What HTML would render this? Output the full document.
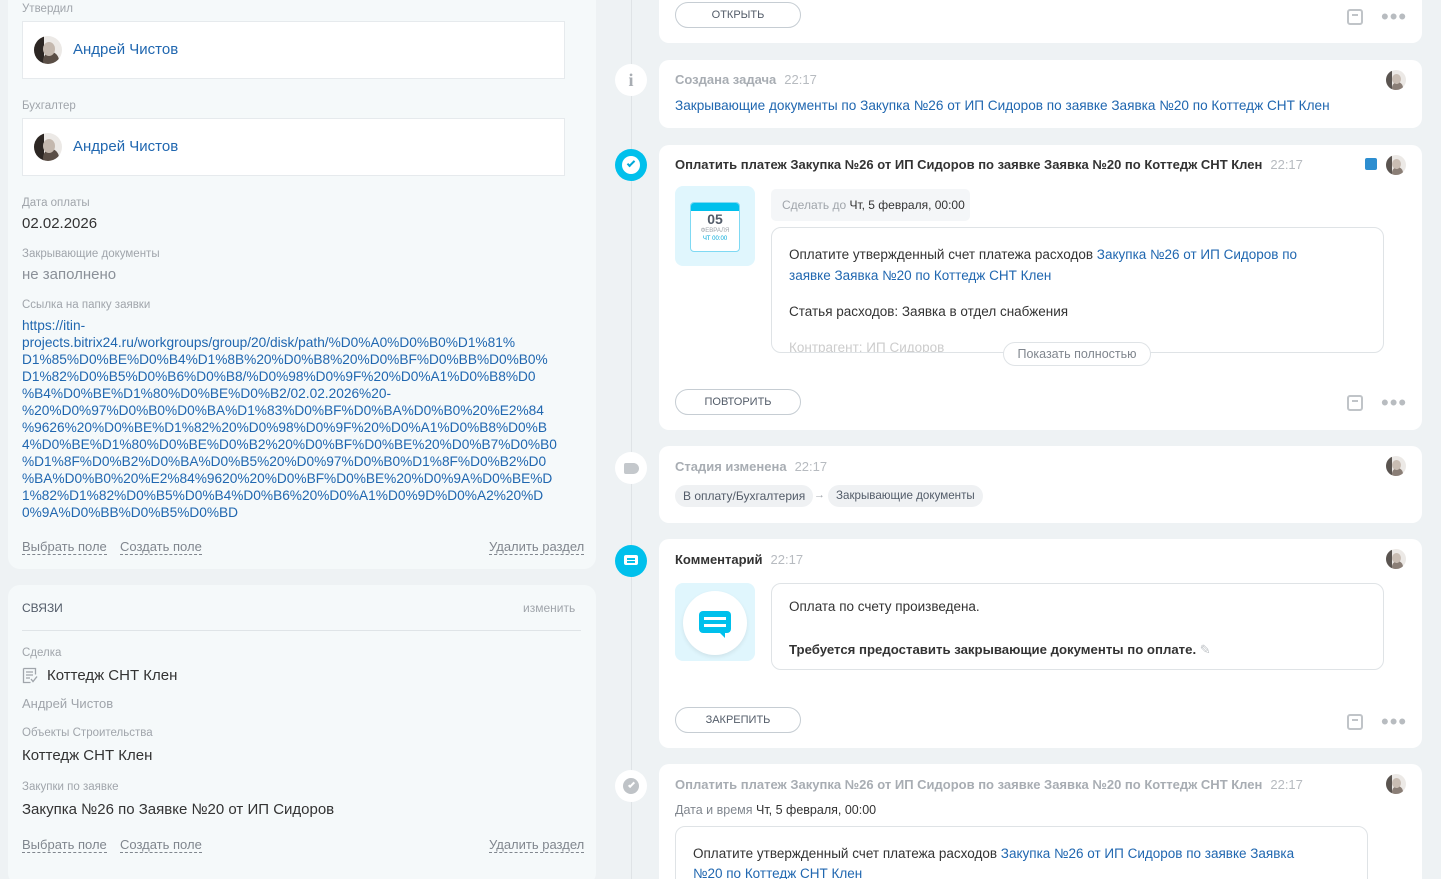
<!DOCTYPE html>
<html><head><meta charset="utf-8"><style>
*{box-sizing:border-box;margin:0;padding:0}
html,body{width:1441px;height:879px;overflow:hidden}
body{background:#eef2f4;font-family:"Liberation Sans",sans-serif;position:relative;color:#333}
.a{position:absolute}
.panel{position:absolute;left:8px;width:588px;background:#f5f9fa;border-radius:12px}
.lbl{position:absolute;left:22px;font-size:11.5px;color:#a0a5ab}
.val{position:absolute;left:22px;font-size:15px;color:#333}
.ubox{position:absolute;left:22px;width:543px;height:58px;background:#fff;border:1px solid #e6eaed}
.ava{position:absolute;width:28px;height:28px;border-radius:50%;overflow:hidden;background:#ece9e6}
.ava:before{content:"";position:absolute;left:0;top:0;width:10px;height:28px;background:#2c2623}
.ava:after{content:"";position:absolute;left:9px;top:6px;width:12px;height:14px;border-radius:50%;background:#c4b8ae;box-shadow:2px 12px 0 2px #5a4e46}
.uname{position:absolute;left:50px;top:19px;font-size:15px;color:#2067b0}
.dash{position:absolute;font-size:13px;color:#80868e;border-bottom:1px dashed #80868e;line-height:14px}
.card{position:absolute;left:659px;width:763px;background:#fff;border-radius:10px;overflow:hidden}
.btn{position:absolute;width:126px;height:26px;border:1px solid #c6cdd3;border-radius:13px;font-size:11px;text-align:center;line-height:24px;color:#535c69;background:#fff}
.ico{position:absolute;width:16px;height:16px;border:2px solid #c0c4c8;border-radius:3px}
.ico:after{content:"";position:absolute;left:3px;top:3px;width:6px;height:2px;background:#c0c4c8}
.dots{position:absolute;font-size:22px;color:#b8bcc0;letter-spacing:1px;line-height:10px}
.ttl{position:absolute;left:16px;font-size:13px;font-weight:bold;color:#333}
.tm{font-weight:normal;color:#b7bbc0;margin-left:8px}
.ta{position:absolute;right:16px;width:20px;height:20px;border-radius:50%;overflow:hidden;background:#ece9e6}
.ta:before{content:"";position:absolute;left:0;top:0;width:6px;height:20px;background:#5a5450}
.ta:after{content:"";position:absolute;left:6px;top:4px;width:9px;height:10px;border-radius:50%;background:#c9bdb3;box-shadow:1px 9px 0 1px #8a7e76}
.node{position:absolute;left:615px;width:32px;height:32px;border-radius:50%}
.lnk{color:#2067b0}
</style></head><body>
<div class="panel" style="top:-20px;height:589px"></div>
<div class="lbl" style="top:3px">Утвердил</div>
<div class="ubox" style="top:21px"><div class="ava" style="left:11px;top:14px"></div><div class="uname">Андрей Чистов</div></div>
<div class="lbl" style="top:100px">Бухгалтер</div>
<div class="ubox" style="top:118px"><div class="ava" style="left:11px;top:14px"></div><div class="uname">Андрей Чистов</div></div>
<div class="lbl" style="top:197px">Дата оплаты</div>
<div class="val" style="top:215px">02.02.2026</div>
<div class="lbl" style="top:248px">Закрывающие документы</div>
<div class="val" style="top:266px;color:#8a9098">не заполнено</div>
<div class="lbl" style="top:299px">Ссылка на папку заявки</div>
<div class="a" style="left:22px;top:317px;font-size:13.7px;line-height:17px;color:#2067b0">https://itin-<br>projects.bitrix24.ru/workgroups/group/20/disk/path/%D0%A0%D0%B0%D1%81%<br>D1%85%D0%BE%D0%B4%D1%8B%20%D0%B8%20%D0%BF%D0%BB%D0%B0%<br>D1%82%D0%B5%D0%B6%D0%B8/%D0%98%D0%9F%20%D0%A1%D0%B8%D0<br>%B4%D0%BE%D1%80%D0%BE%D0%B2/02.02.2026%20-<br>%20%D0%97%D0%B0%D0%BA%D1%83%D0%BF%D0%BA%D0%B0%20%E2%84<br>%9626%20%D0%BE%D1%82%20%D0%98%D0%9F%20%D0%A1%D0%B8%D0%B<br>4%D0%BE%D1%80%D0%BE%D0%B2%20%D0%BF%D0%BE%20%D0%B7%D0%B0<br>%D1%8F%D0%B2%D0%BA%D0%B5%20%D0%97%D0%B0%D1%8F%D0%B2%D0<br>%BA%D0%B0%20%E2%84%9620%20%D0%BF%D0%BE%20%D0%9A%D0%BE%D<br>1%82%D1%82%D0%B5%D0%B4%D0%B6%20%D0%A1%D0%9D%D0%A2%20%D<br>0%9A%D0%BB%D0%B5%D0%BD</div>
<div class="dash" style="left:22px;top:540px">Выбрать поле</div>
<div class="dash" style="left:120px;top:540px">Создать поле</div>
<div class="dash" style="left:489px;top:540px">Удалить раздел</div>

<div class="panel" style="top:585px;height:300px"></div>
<div class="a" style="left:22px;top:601px;font-size:12px;color:#535c69">СВЯЗИ</div>
<div class="a" style="left:523px;top:601px;font-size:12px;color:#a0a5ab">изменить</div>
<div class="a" style="left:22px;top:630px;width:559px;height:1px;background:#dfe4e7"></div>
<div class="lbl" style="top:647px">Сделка</div>
<svg class="a" style="left:22px;top:667px" width="16" height="17" viewBox="0 0 16 17"><path d="M1.5 1.5h12v6M1.5 1.5v14h7" fill="none" stroke="#a0a5ab" stroke-width="1.3"/><path d="M4 5h7M4 8h7M4 11h4" stroke="#a0a5ab" stroke-width="1.2"/><path d="M9 12l2 2.5 4-5" fill="none" stroke="#a0a5ab" stroke-width="1.4"/></svg>
<div class="val" style="left:47px;top:667px">Коттедж СНТ Клен</div>
<div class="a" style="left:22px;top:696px;font-size:13px;color:#a0a5ab">Андрей Чистов</div>
<div class="lbl" style="top:727px">Объекты Строительства</div>
<div class="val" style="top:747px">Коттедж СНТ Клен</div>
<div class="lbl" style="top:781px">Закупки по заявке</div>
<div class="val" style="top:801px">Закупка №26 по Заявке №20 от ИП Сидоров</div>
<div class="dash" style="left:22px;top:838px">Выбрать поле</div>
<div class="dash" style="left:120px;top:838px">Создать поле</div>
<div class="dash" style="left:489px;top:838px">Удалить раздел</div>

<div class="a" style="left:631px;top:0;width:1px;height:879px;background:#dfe3e6"></div>

<div class="card" style="top:-20px;height:63px">
<div class="btn" style="left:16px;top:22px">ОТКРЫТЬ</div>
<div class="ico" style="left:688px;top:29px"></div><div class="dots" style="left:722px;top:32px">•••</div></div>

<div class="node" style="top:64px;background:#fff;color:#a8adb3;text-align:center;font:bold 18px/32px 'Liberation Serif',serif">i</div>
<div class="card" style="top:60px;height:68px">
<div class="ttl" style="top:12px;color:#a8adb3">Создана задача<span class="tm">22:17</span></div>
<div class="a" style="left:16px;top:38px;font-size:13.6px;color:#2067b0">Закрывающие документы по Закупка №26 от ИП Сидоров по заявке Заявка №20 по Коттедж СНТ Клен</div>
<div class="ta" style="top:10px"></div></div>

<div class="node" style="top:149px;background:#00c0ec"><div class="a" style="left:7px;top:7px;width:18px;height:18px;border-radius:50%;background:#fff"></div><div class="a" style="left:12px;top:12px;width:8px;height:4px;border-left:2px solid #00a8d8;border-bottom:2px solid #00a8d8;transform:rotate(-45deg)"></div></div>
<div class="card" style="top:145px;height:285px">
<div class="ttl" style="top:12px">Оплатить платеж Закупка №26 от ИП Сидоров по заявке Заявка №20 по Коттедж СНТ Клен<span class="tm">22:17</span></div>
<div class="a" style="left:706px;top:13px;width:12px;height:12px;background:#2d8ed0;border-radius:2px"></div>
<div class="ta" style="top:10px"></div>
<div class="a" style="left:16px;top:41px;width:80px;height:80px;background:#e0f6fd;border-radius:8px">
<div class="a" style="left:15px;top:16px;width:50px;height:50px;background:#fff;border:1px solid #7fd9f3;border-radius:4px;overflow:hidden"><div style="height:8px;background:#00c0ec"></div>
<div style="text-align:center;font-size:14px;font-weight:bold;color:#535c69;line-height:16px">05</div>
<div style="text-align:center;font-size:6px;color:#a0a5ab;line-height:8px">ФЕВРАЛЯ</div><div style="text-align:center;font-size:6px;color:#00a8d8;line-height:8px">ЧТ 00:00</div></div></div>
<div class="a" style="left:112px;top:44px;width:199px;height:32px;background:#f4f6f8;border-radius:5px;font-size:12px;line-height:32px;padding-left:11px;color:#a0a5ab;white-space:nowrap">Сделать до <span style="color:#333">Чт, 5 февраля, 00:00</span></div>
<div class="a" style="left:112px;top:82px;width:613px;height:126px;border:1px solid #dfe3e6;border-radius:10px;overflow:hidden;padding:16px 17px;font-size:13.5px;line-height:21px">Оплатите утвержденный счет платежа расходов <span class="lnk">Закупка №26 от ИП Сидоров по<br>заявке Заявка №20 по Коттедж СНТ Клен</span><div style="margin-top:15px">Статья расходов: Заявка в отдел снабжения</div><div style="margin-top:15px;color:#ccc">Контрагент: ИП Сидоров</div></div>
<div class="a" style="left:344px;top:197px;width:148px;height:24px;border:1px solid #dfe3e6;border-radius:12px;background:#fff;font-size:12.5px;color:#80868e;text-align:center;line-height:22px">Показать полностью</div>
<div class="btn" style="left:16px;top:244px">ПОВТОРИТЬ</div>
<div class="ico" style="left:688px;top:250px"></div><div class="dots" style="left:722px;top:253px">•••</div></div>

<div class="node" style="top:452px;background:#fff"><div class="a" style="left:9px;top:11px;width:15px;height:11px;background:#c4c8cc;border-radius:2px 6px 6px 2px"></div></div>
<div class="card" style="top:446px;height:77px">
<div class="ttl" style="top:13px;color:#a8adb3">Стадия изменена<span class="tm">22:17</span></div>
<div class="ta" style="top:10px"></div>
<div class="a" style="left:16px;top:39px;height:22px;padding:0 8px;background:#eff1f3;border-radius:11px;font-size:12px;line-height:22px;color:#535c69">В оплату/Бухгалтерия</div>
<div class="a" style="left:155px;top:43px;font-size:11px;color:#a0a5ab">→</div>
<div class="a" style="left:169px;top:39px;height:22px;padding:0 8px;background:#eff1f3;border-radius:11px;font-size:11.6px;line-height:22px;color:#535c69">Закрывающие документы</div></div>

<div class="node" style="top:545px;background:#00c0ec"><div class="a" style="left:9px;top:10px;width:14px;height:10px;background:#fff;border-radius:2px"></div><div class="a" style="left:12px;top:13px;width:8px;height:1.5px;background:#00c0ec;box-shadow:0 3px 0 #00c0ec"></div></div>
<div class="card" style="top:539px;height:209px">
<div class="ttl" style="top:13px">Комментарий<span class="tm">22:17</span></div>
<div class="ta" style="top:10px"></div>
<div class="a" style="left:16px;top:44px;width:80px;height:78px;background:#e0f6fd;border-radius:8px"><div class="a" style="left:8px;top:8px;width:64px;height:64px;border-radius:50%;background:#fff;box-shadow:0 2px 4px rgba(0,0,0,.08)"></div>
<div class="a" style="left:24px;top:28px;width:32px;height:22px;background:#00c0ec;border-radius:4px"></div><div class="a" style="left:29px;top:34px;width:22px;height:3px;background:#fff;box-shadow:0 7px 0 #fff"></div><div class="a" style="left:44px;top:49px;border-top:6px solid #00c0ec;border-left:6px solid transparent"></div></div>
<div class="a" style="left:112px;top:44px;width:613px;height:87px;border:1px solid #dfe3e6;border-radius:10px;padding:13px 17px;font-size:13.5px;line-height:20px">Оплата по счету произведена.<div style="margin-top:23px;font-weight:bold;font-size:13.2px">Требуется предоставить закрывающие документы по оплате. <span style="color:#c0c4c8;font-weight:normal">✎</span></div></div>
<div class="btn" style="left:16px;top:168px">ЗАКРЕПИТЬ</div>
<div class="ico" style="left:688px;top:175px"></div><div class="dots" style="left:722px;top:178px">•••</div></div>

<div class="node" style="top:770px;background:#fff"><div class="a" style="left:8px;top:8px;width:16px;height:16px;border-radius:50%;background:#bfc3c7"></div><div class="a" style="left:13px;top:13px;width:7px;height:3px;border-left:2px solid #fff;border-bottom:2px solid #fff;transform:rotate(-45deg)"></div></div>
<div class="card" style="top:764px;height:130px">
<div class="ttl" style="top:13px;color:#a8adb3">Оплатить платеж Закупка №26 от ИП Сидоров по заявке Заявка №20 по Коттедж СНТ Клен<span class="tm">22:17</span></div>
<div class="ta" style="top:10px"></div>
<div class="a" style="left:16px;top:39px;font-size:12.5px;color:#80868e">Дата и время <span style="color:#333">Чт, 5 февраля, 00:00</span></div>
<div class="a" style="left:16px;top:62px;width:693px;height:80px;border:1px solid #dfe3e6;border-radius:10px;padding:17px 17px;font-size:13.5px;line-height:20px">Оплатите утвержденный счет платежа расходов <span class="lnk">Закупка №26 от ИП Сидоров по заявке Заявка<br>№20 по Коттедж СНТ Клен</span></div></div>
</body></html>
